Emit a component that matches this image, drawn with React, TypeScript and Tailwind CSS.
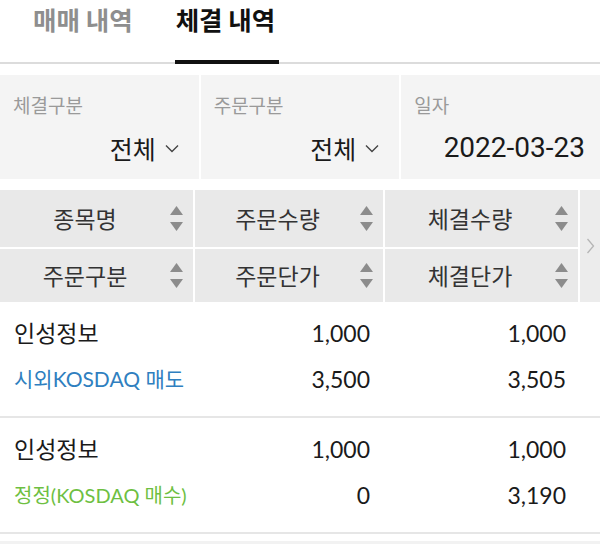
import React from "react";

const KR = "font-['Lato','Noto_Sans_CJK_KR',sans-serif]";

function SortIcon() {
  return (
    <svg width="13" height="25" viewBox="0 0 13 25" className="shrink-0">
      <polygon points="6.5,0 13,9 0,9" fill="#8c8c8c" />
      <polygon points="0,16 13,16 6.5,25" fill="#8c8c8c" />
    </svg>
  );
}

function Chevron() {
  return (
    <svg width="14" height="9" viewBox="0 0 14 9" className="shrink-0">
      <polyline points="1,1.5 7,7.5 13,1.5" fill="none" stroke="#444" strokeWidth="1.4" />
    </svg>
  );
}

function FilterCell({ label, value, chevron, valueClass }: { label: string; value: string; chevron?: boolean; valueClass?: string }) {
  return (
    <div className="bg-[#f4f4f4] flex flex-col">
      <div className="pl-[13px] pt-[19px] text-[19px] leading-[22px] text-[#9a9a9a] font-['Noto_Sans_CJK_KR',sans-serif]">{label}</div>
      <div className={`flex items-center justify-end gap-[9px] pt-[17px] ${chevron ? "pr-[20px]" : "pr-[15px]"}`}>
        <span className={`leading-[30px] text-[#1a1a1a] ${valueClass ?? ""}`}>{value}</span>
        {chevron && <Chevron />}
      </div>
    </div>
  );
}

function HeadCell({ text }: { text: string }) {
  return (
    <div className="bg-[#e9e9e9] flex items-center pr-[10px]">
      <span className="flex-1 text-center text-[23px] text-[#333] font-['Noto_Sans_CJK_KR',sans-serif]">{text}</span>
      <SortIcon />
    </div>
  );
}

function DataRow({ name, sub, subClass, a1, a2, b1, b2 }: { name: string; sub: string; subClass: string; a1: string; a2: string; b1: string; b2: string }) {
  return (
    <div className={`grid grid-cols-[195px_190px_195px_20px] pt-[7px] pb-[15px] border-b-2 border-[#e6e6e6] ${KR}`}>
      <div className="flex flex-col pl-[14px]">
        <span className="leading-[48px] text-[23px] text-[#1a1a1a]">{name}</span>
        <span className={`leading-[44px] whitespace-nowrap ${subClass}`}>{sub}</span>
      </div>
      <div className="flex flex-col items-end pr-[15px] text-[23px] text-[#1a1a1a]">
        <span className="leading-[48px]">{a1}</span>
        <span className="leading-[44px]">{a2}</span>
      </div>
      <div className="flex flex-col items-end pr-[14px] text-[23px] text-[#1a1a1a]">
        <span className="leading-[48px]">{b1}</span>
        <span className="leading-[44px]">{b2}</span>
      </div>
      <div />
    </div>
  );
}

export default function App() {
  return (
    <div className="w-[600px] h-[544px] bg-white overflow-hidden">
      {/* Tabs */}
      <div className="flex h-[64px] border-b-[2px] border-[#dcdcdc] pl-[33px] gap-[43px] font-['Noto_Sans_CJK_KR',sans-serif] font-bold text-[25.5px]">
        <div className="flex flex-col">
          <span className="leading-[38px] text-[#8e8e8e]">매매 내역</span>
        </div>
        <div className="flex flex-col -mb-[2px]">
          <span className="leading-[38px] text-[#111]">체결 내역</span>
          <div className="mt-auto h-[4px] bg-[#111] w-[104px] -ml-[1px]" />
        </div>
      </div>

      {/* Filters */}
      <div className="mt-[11px] grid grid-cols-3 gap-[2px] h-[104px]">
        <FilterCell label="체결구분" value="전체" chevron valueClass="text-[25px] font-['Noto_Sans_CJK_KR',sans-serif]" />
        <FilterCell label="주문구분" value="전체" chevron valueClass="text-[25px] font-['Noto_Sans_CJK_KR',sans-serif]" />
        <FilterCell label="일자" value="2022-03-23" valueClass="text-[28px] font-['Roboto',sans-serif]" />
      </div>

      {/* Header */}
      <div className="mt-[11px] grid grid-cols-[193px_188px_193px_20px] grid-rows-[57px_53px] gap-[2px]">
        <HeadCell text="종목명" />
        <HeadCell text="주문수량" />
        <HeadCell text="체결수량" />
        <div className="row-span-2 bg-[#ececec] flex items-center justify-center">
          <svg width="9" height="16" viewBox="0 0 9 16">
            <polyline points="1.5,1 7.5,8 1.5,15" fill="none" stroke="#b5b5b5" strokeWidth="1.3" />
          </svg>
        </div>
        <HeadCell text="주문구분" />
        <HeadCell text="주문단가" />
        <HeadCell text="체결단가" />
      </div>

      {/* Rows */}
      <DataRow name="인성정보" sub="시외KOSDAQ 매도" subClass="text-[21px] text-[#2f7fc0]" a1="1,000" a2="3,500" b1="1,000" b2="3,505" />
      <DataRow name="인성정보" sub="정정(KOSDAQ 매수)" subClass="text-[20px] text-[#6ebf42]" a1="1,000" a2="0" b1="1,000" b2="3,190" />
      <div className="mt-[7px] h-[10px] bg-[#f2f2f2]" />
    </div>
  );
}
